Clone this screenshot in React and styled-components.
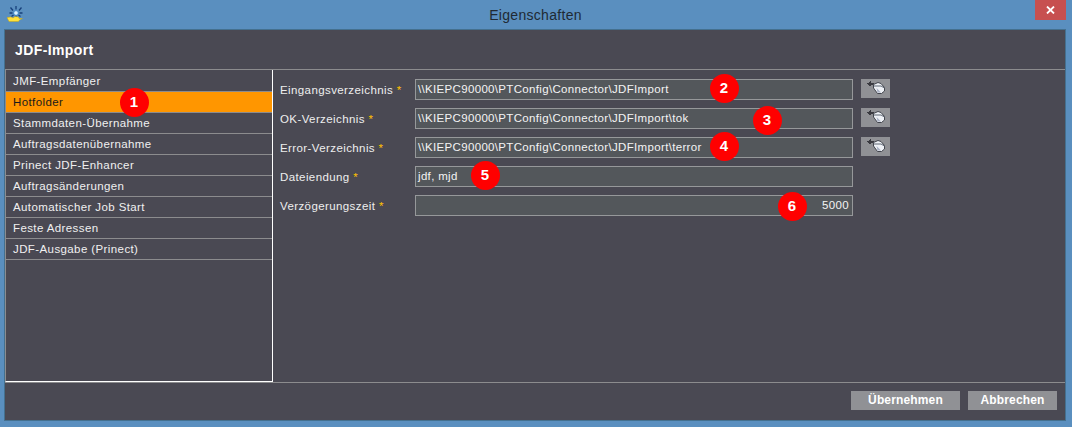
import React from "react";
import styled, { createGlobalStyle } from "styled-components";

const Global = createGlobalStyle`
  html, body { margin: 0; padding: 0; background: #5a8fbf; }
  * { box-sizing: border-box; }
`;

const Win = styled.div`
  position: relative;
  width: 1072px;
  height: 427px;
  display: flex;
  flex-direction: column;
  background: #5a8fbf;
  font-family: "Liberation Sans", Arial, sans-serif;
  overflow: hidden;
`;
const TitleBar = styled.div`
  height: 29px;
  flex: none;
  display: grid;
  grid-template-columns: 1fr auto 1fr;
  align-items: start;
  padding: 0 6px 0 7px;
`;
const AppLogo = styled.svg`
  width: 17px;
  height: 17px;
  margin-top: 6px;
  display: block;
`;
const Title = styled.div`
  font-size: 14px;
  line-height: 30px;
  letter-spacing: 0.3px;
  color: #1f2a33;
  margin-left: -2px;
`;
const Close = styled.div`
  justify-self: end;
  width: 31px;
  height: 20px;
  background: #c75050;
  display: flex;
  align-items: center;
  justify-content: center;
`;
const Panel = styled.div`
  flex: 1;
  margin: 0 6px 6px 4px;
  border: 1px solid #44708f;
  background: #4a4953;
  display: flex;
  flex-direction: column;
  min-height: 0;
`;
const Header = styled.div`
  height: 40px;
  flex: none;
  border-bottom: 1px solid #8c8c8e;
  padding: 0 10px;
  font-size: 14px;
  font-weight: bold;
  line-height: 41px;
  letter-spacing: 0.4px;
  color: #fff;
`;
const Body = styled.div`
  flex: 1;
  display: flex;
  min-height: 0;
  border-bottom: 1px solid #8c8c8e;
`;
const Side = styled.div`
  width: 268px;
  flex: none;
  border-right: 1px solid #fff;
  border-bottom: 1px solid #fff;
  border-left: 1px solid #8c8c8e;
  padding-top: 1px;
`;
const Item = styled.div`
  height: 21px;
  padding: 1px 0 0 7px;
  border-bottom: 1px solid #8c8c8e;
  font-size: 11.5px;
  line-height: 19px;
  letter-spacing: 0.4px;
  background: ${(p) => (p.$active ? "#ff9600" : "transparent")};
  color: ${(p) => (p.$active ? "#1a1a1a" : "#f0f0f0")};
`;
const Form = styled.div`
  flex: 1;
  padding: 9px 0 0 7px;
  display: flex;
  flex-direction: column;
  gap: 8px;
`;
const Row = styled.div`
  height: 21px;
  display: flex;
  align-items: flex-start;
`;
const Label = styled.div`
  width: 135px;
  flex: none;
  font-size: 11.5px;
  line-height: 22px;
  letter-spacing: 0.4px;
  color: #eeeeee;
`;
const Star = styled.span`
  color: #ffc000;
`;
const Field = styled.div`
  width: 438px;
  height: 21px;
  flex: none;
  border: 1px solid #96989a;
  background: #53575b;
  padding: 0 3px 0 2px;
  font-size: 11.5px;
  line-height: 19px;
  letter-spacing: 0.33px;
  color: #f4f4f4;
  text-align: ${(p) => (p.$right ? "right" : "left")};
  white-space: nowrap;
`;
const Browse = styled.div`
  width: 29px;
  height: 19px;
  flex: none;
  margin-left: 8px;
  background: #909195;
  display: flex;
  align-items: center;
  justify-content: center;
`;
const Footer = styled.div`
  height: 37px;
  flex: none;
  display: flex;
  justify-content: flex-end;
  gap: 8px;
  padding: 8px 8px 0 0;
`;
const Btn = styled.div`
  width: ${(p) => p.$w}px;
  height: 19px;
  background: #909195;
  color: #fff;
  font-size: 12px;
  font-weight: bold;
  line-height: 19px;
  letter-spacing: 0.15px;
  text-align: center;
`;
const Badge = styled.div`
  position: absolute;
  left: ${(p) => p.$x - 14.5}px;
  top: ${(p) => p.$y - 14.5}px;
  width: 29px;
  height: 29px;
  border-radius: 50%;
  background: #ff0000;
  color: #fff;
  font-size: 15px;
  font-weight: bold;
  line-height: 28px;
  text-align: center;
`;

const FolderIcon = () => (
  <svg width="20" height="14" viewBox="0 0 20 14" style={{ marginTop: -3 }} shapeRendering="crispEdges">
    <path d="M3 3h5v1.5H3z" fill="#3a3a40" />
    <path d="M1 3.7L4.5 1v5.4z" fill="#3a3a40" />
    <path d="M7.5 4.5L12 2.5l3 1 3.5 4v3.5L15.5 13.5h-4L7.5 8z" fill="#eef1f6" stroke="#42454d" strokeWidth="1" shapeRendering="auto" />
    <path d="M8 6h7l3.5 2" fill="none" stroke="#5e6672" strokeWidth="1" shapeRendering="auto" />
    <path d="M10.5 8l4.5 4.5h-3.5z" fill="#a9b1c4" shapeRendering="auto" />
  </svg>
);

const Logo = () => (
  <AppLogo viewBox="0 0 17 17">
    <g stroke="#17407a" strokeWidth="1.3">
      <path d="M9 0v3.5M9 9v2M3.5 1.5L6 4.5M14.5 1.5L12 4.5M2.5 7h3M12.5 7h3M4.5 10.5L6.5 9M13.5 10.5L11.5 9" />
    </g>
    <circle cx="9" cy="7" r="2.4" fill="#d8f2ff" stroke="#3a82c4" strokeWidth="1" />
    <path d="M0 11.5l4-.5 2 1 2-1.5 3.5.5.5 1.5h3.5l-3 1.5-1 1.5H2z" fill="#ffe23a" stroke="#c9a200" strokeWidth=".4" />
  </AppLogo>
);

const items = [
  "JMF-Empfänger",
  "Hotfolder",
  "Stammdaten-Übernahme",
  "Auftragsdatenübernahme",
  "Prinect JDF-Enhancer",
  "Auftragsänderungen",
  "Automatischer Job Start",
  "Feste Adressen",
  "JDF-Ausgabe (Prinect)",
];

const rows = [
  { label: "Eingangsverzeichnis", value: "\\\\KIEPC90000\\PTConfig\\Connector\\JDFImport", browse: true },
  { label: "OK-Verzeichnis", value: "\\\\KIEPC90000\\PTConfig\\Connector\\JDFImport\\tok", browse: true },
  { label: "Error-Verzeichnis", value: "\\\\KIEPC90000\\PTConfig\\Connector\\JDFImport\\terror", browse: true },
  { label: "Dateiendung", value: "jdf, mjd" },
  { label: "Verzögerungszeit", value: "5000", right: true },
];

const badges = [
  [134, 102, 1],
  [724, 88, 2],
  [767, 120, 3],
  [724, 146, 4],
  [485, 175, 5],
  [792, 206, 6],
];

export default function App() {
  return (
    <Win>
      <Global />
      <TitleBar>
        <Logo />
        <Title>Eigenschaften</Title>
        <Close>
          <svg width="9" height="8" viewBox="0 0 9 8">
            <path d="M1 .5l7 7M8 .5l-7 7" stroke="#fff" strokeWidth="1.8" />
          </svg>
        </Close>
      </TitleBar>
      <Panel>
        <Header>JDF-Import</Header>
        <Body>
          <Side>
            {items.map((t, i) => (
              <Item key={t} $active={i === 1}>{t}</Item>
            ))}
          </Side>
          <Form>
            {rows.map((r) => (
              <Row key={r.label}>
                <Label>
                  {r.label} <Star>*</Star>
                </Label>
                <Field $right={r.right}>{r.value}</Field>
                {r.browse && (
                  <Browse>
                    <FolderIcon />
                  </Browse>
                )}
              </Row>
            ))}
          </Form>
        </Body>
        <Footer>
          <Btn $w={109}>Übernehmen</Btn>
          <Btn $w={89}>Abbrechen</Btn>
        </Footer>
      </Panel>
      {badges.map(([x, y, n]) => (
        <Badge key={n} $x={x} $y={y}>{n}</Badge>
      ))}
    </Win>
  );
}
